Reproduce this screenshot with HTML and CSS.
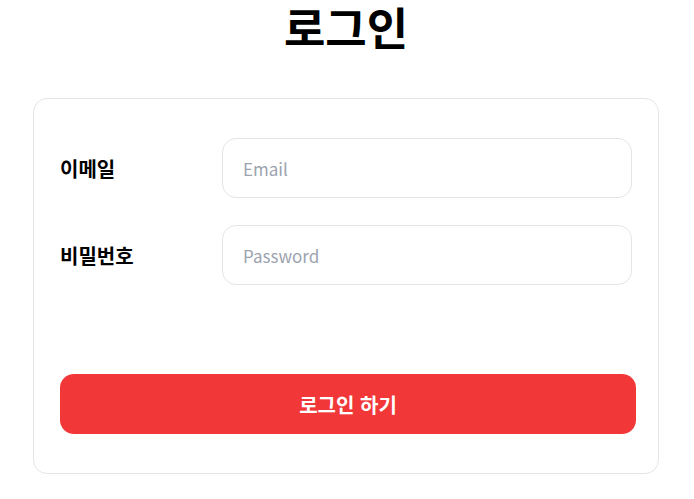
FILE: index.html
```html
<!DOCTYPE html>
<html lang="ko">
<head>
    <meta charset="UTF-8">
    <meta name="viewport" content="width=device-width, initial-scale=1.0">
    <title>로그인</title>
    <link rel="stylesheet" href="styles.css">
</head>
<body>

<div class="container">
    <h1>로그인</h1>

    <form class="login-card">
        <div class="field">
            <label for="email">이메일</label>
            <input type="email" id="email" placeholder="Email">
        </div>
        <div class="field">
            <label for="password">비밀번호</label>
            <input type="password" id="password" placeholder="Password">
        </div>
        <button type="button" class="btn">로그인 하기</button>
    </form>
</div>

</body>
</html>
```

FILE: styles.css
```css
/* 로그인 페이지 */
body {
    margin: 0;
    font-family: "Noto Sans CJK KR", "Noto Sans", sans-serif;
    background-color: #fff;
    color: #000;
}
.container {
    width: 626px;
    margin: 0 auto;
    padding-right: 2px;
}
h1 {
    margin: 0 0 44px;
    line-height: 54px;
    font-size: 45px;
    font-weight: 700;
    text-align: center;
}
.login-card {
    box-sizing: border-box;
    border: 1px solid #e5e5e5;
    border-radius: 14px;
    padding: 39px 22px 39px 26px;
}
.field {
    display: flex;
    align-items: center;
    margin-bottom: 27px;
}
.field label {
    width: 162px;
    font-size: 20px;
    font-weight: 600;
}
.field input {
    box-sizing: border-box;
    width: 410px;
    height: 60px;
    padding: 0 20px;
    border: 1px solid #e5e5e5;
    border-radius: 14px;
    font-family: "Noto Sans CJK KR", sans-serif;
    font-size: 17px;
    outline: none;
}
.field input::placeholder {
    color: #9ca3af;
}
.btn {
    display: block;
    width: 100%;
    height: 60px;
    margin-top: 89px;
    border: none;
    border-radius: 14px;
    background-color: #f23738;
    color: #fff;
    font-family: inherit;
    font-size: 20px;
    font-weight: 700;
    cursor: pointer;
}
```
